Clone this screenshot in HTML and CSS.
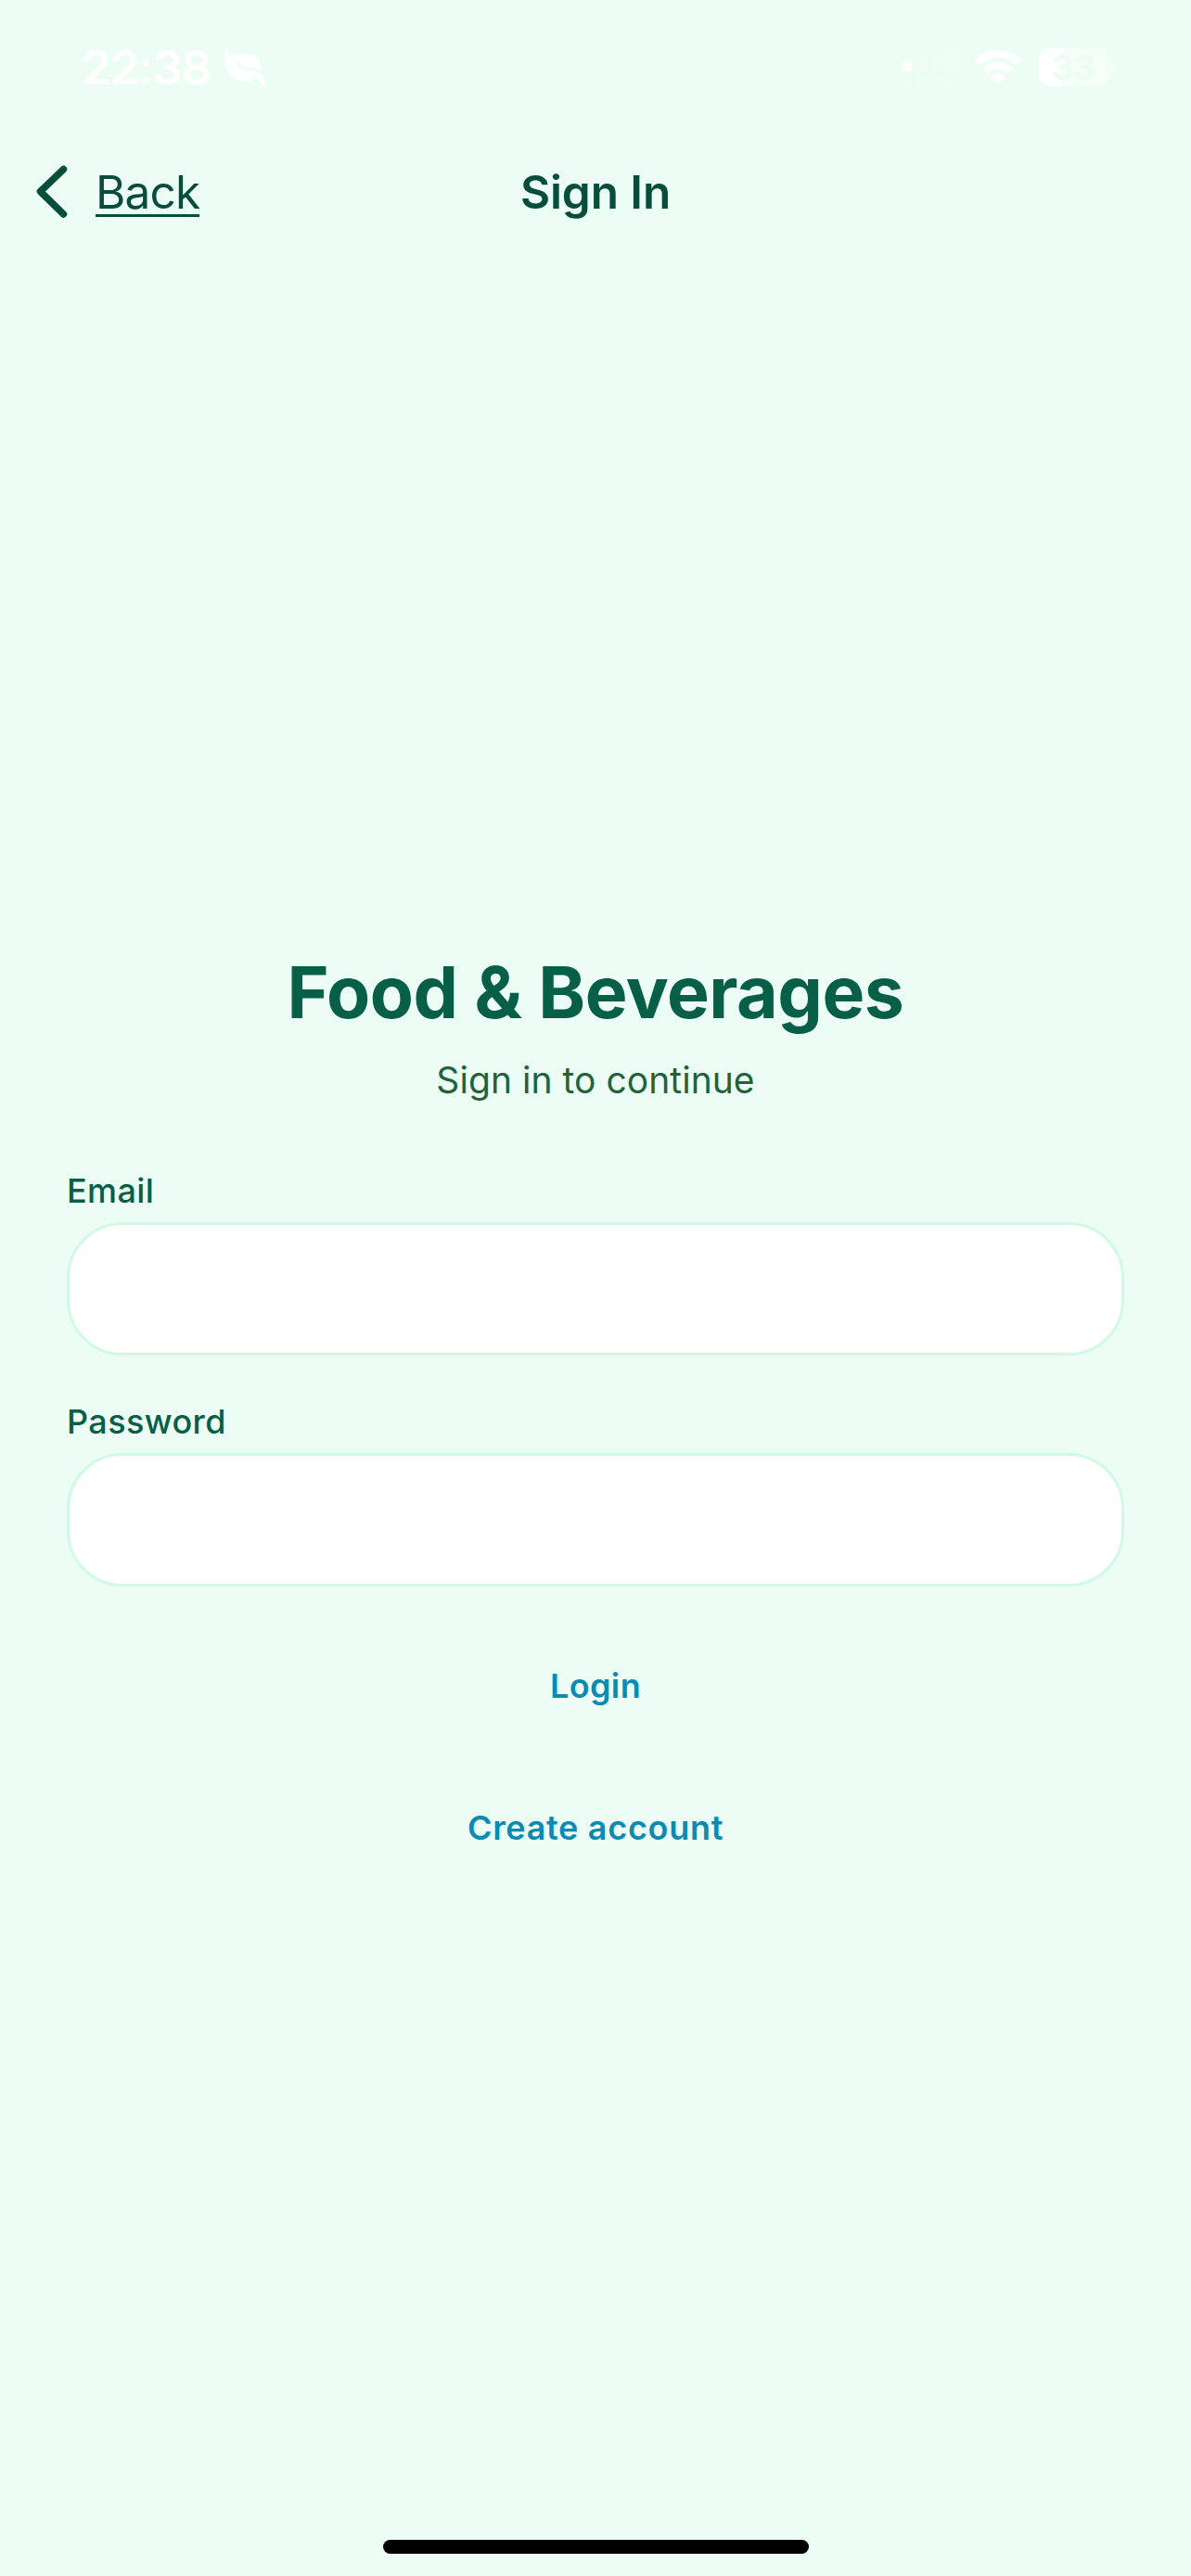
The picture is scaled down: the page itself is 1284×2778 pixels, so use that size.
FILE: index.html
```html
<!DOCTYPE html>
<html lang="en">
<head>
<meta charset="utf-8">
<title>Sign In</title>
<link rel="stylesheet" href="styles.css">
</head>
<body>
<div class="screen">
  <div class="status">
    <div class="status-left">
      <span class="time">22:38</span>
      <svg class="leaf" width="44" height="38" viewBox="0 0 44 38"><path fill="#fff" d="M0.2 2C.5-.1 2.400-.2 3.600 1.300C5 3.500 8.500 4.200 13 3.800C19 3.100 25 2.300 30.500 4.200C37 6.500 40.500 12 39.400 20.800C33 16.500 25 20 18 16.300C15 14.500 15 11 12 10.500C12 15 15 18 20 19.300C27 21 34 18.500 38.500 24C41 27 43 31 43.700 34.500C43.800 37.800 39.600 38.200 38.800 36C37.900 33 37 30 35.500 28.300C31 33.200 24 33.700 18 32.800C5 30.800-.5 20 .2 2Z"/></svg>
    </div>
    <div class="status-right">
      <svg class="signal" width="60" height="42" viewBox="0 0 60 42"><g fill="#fff"><rect x="0" y="13" width="10" height="12" rx="3.500"/><g opacity=".22"><rect x="16" y="10" width="10" height="15" rx="3"/><rect x="32" y="5" width="10" height="20" rx="3"/><rect x="48" y="0" width="10" height="25" rx="3"/><rect x="0" y="31" width="10" height="10" rx="4"/><rect x="16" y="31" width="10" height="10" rx="4"/><rect x="32" y="31" width="10" height="10" rx="4"/><rect x="48" y="31" width="10" height="10" rx="4"/></g></g></svg>
      <svg class="wifi" width="50" height="38" viewBox="0 0 50 38"><g fill="#fff"><path d="M.7 10.200C14-3.300 36-3.300 49.300 10.200Q50.300 11.200 49.300 12.200L45.800 15.700Q44.800 16.600 43.800 15.600C33 5.500 17 5.500 6.200 15.600Q5.200 16.600 4.200 15.700L.7 12.200Q-.3 11.200 .7 10.200Z"/><path d="M9.200 18.800C18 10.700 32 10.700 40.800 18.800Q41.600 19.700 40.800 20.600L37 24.400Q36 25.200 35 24.400C29 19 21 19 15 24.400Q14 25.200 13 24.400L9.200 20.600Q8.400 19.700 9.200 18.800Z"/><path d="M17.900 27.700C22 24.500 28 24.500 32.100 27.700Q33 28.500 32.200 29.400L25.800 36.300Q25 37.100 24.200 36.300L17.800 29.400Q17 28.500 17.900 27.700Z"/></g></svg>
      <div class="battery"><div class="cell">33</div><svg width="6" height="12" viewBox="0 0 6 12"><path fill="#fff" opacity=".5" d="M0 0C7 1 7 11 0 12Z"/></svg></div>
    </div>
  </div>
  <header class="nav">
    <a class="back">
      <svg width="34" height="58" viewBox="0 0 34 58"><path d="M29.500 4.500L4.500 28.500L29.500 53" fill="none" stroke="#064e3b" stroke-width="7.500" stroke-linecap="round" stroke-linejoin="round"/></svg>
      <span class="back-label">Back</span>
    </a>
    <div class="nav-title">Sign In</div>
  </header>
  <main class="content">
    <h1 class="title">Food &amp; Beverages</h1>
    <p class="subtitle">Sign in to continue</p>
    <label class="label" for="email">Email</label>
    <input class="field" id="email" type="email">
    <label class="label" for="password">Password</label>
    <input class="field" id="password" type="password">
    <button class="action login">Login</button>
    <button class="action create">Create account</button>
  </main>
  <div class="home"></div>
</div>
</body>
</html>
```
FILE: styles.css
```css
* { box-sizing: border-box; }
body { margin: 0; background: #ecfdf5; font-family: Inter, "Liberation Sans", sans-serif; }
.screen { width: 1284px; height: 2778px; display: flex; flex-direction: column; background: #ecfdf5; }
svg { display: block; flex: none; }

.status { height: 144px; display: flex; justify-content: space-between; color: #fff; padding: 0 82px 0 88px; }
.status-left { display: flex; align-items: flex-start; }
.time { width: 154px; margin-top: 41px; font-size: 51px; line-height: 64px; font-weight: 600; letter-spacing: -1.1px; white-space: nowrap; }
.leaf { margin-top: 55px; }
.status-right { display: flex; align-items: flex-start; }
.signal { margin: 52px 18px 0 0; }
.wifi { margin: 54px 19px 0 0; }
.battery { display: flex; align-items: center; gap: 1px; margin-top: 52px; }
.cell { width: 75px; height: 41px; border-radius: 12px; background: linear-gradient(90deg, #fff 25px, rgba(255, 255, 255, .5) 25px); color: #ecfdf5; font-size: 37px; line-height: 41px; font-weight: 700; text-align: center; }

.nav { height: 126px; display: grid; grid-template-columns: 1fr auto 1fr; align-items: center; padding: 0 39px; color: #064e3b; font-size: 49.5px; line-height: 60px; }
.back { display: flex; align-items: center; gap: 30px; }
.back-label { height: 57px; border-bottom: 3px solid #064e3b; margin-top: -3px; letter-spacing: -.8px; }
.nav-title { font-weight: 600; letter-spacing: -.1px; }

.content { flex: 1; display: flex; flex-direction: column; padding: 752px 72px 0; }
.title { margin: 0; text-align: center; color: #065f46; font-size: 77px; line-height: 96px; font-weight: 700; letter-spacing: -.5px; }
.subtitle { margin: 23px 0 74px; text-align: center; color: #20633a; font-size: 39px; line-height: 48px; letter-spacing: .05px; }
.label { color: #065f46; font-size: 36px; line-height: 42px; font-weight: 500; margin-bottom: 13px; letter-spacing: .4px; }
.field { width: 100%; height: 144px; border: 3px solid #d1fae5; border-radius: 60px; background: #fff; padding: 0 42px; font: inherit; font-size: 48px; outline: none; margin: 0 0 50px; }
.action { height: 150px; border: 0; padding: 0; background: none; color: #0b8ab2; font-family: inherit; font-size: 36px; font-weight: 600; line-height: 42px; text-align: center; letter-spacing: .7px; }
.login { margin: -18px 0 3px; letter-spacing: .4px; }

.home { width: 459px; height: 15px; margin: 0 auto 24px; border-radius: 8px; background: #000; }
```
